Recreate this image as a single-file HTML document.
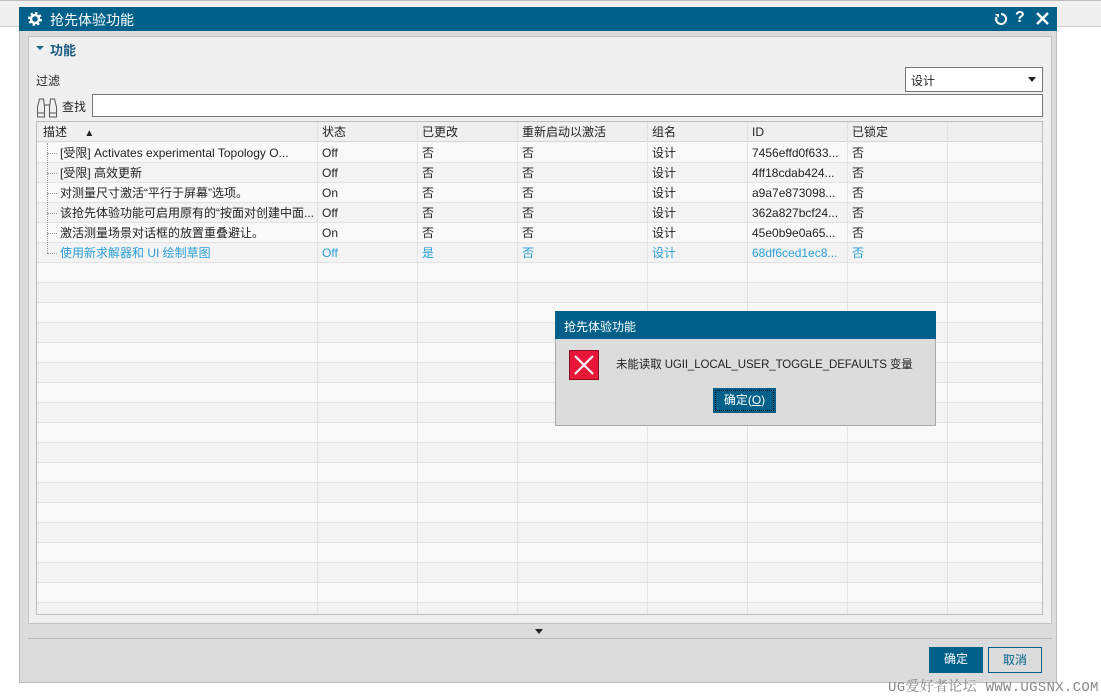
<!DOCTYPE html><html><head><meta charset="utf-8"><style>
*{box-sizing:border-box;margin:0;padding:0}
body{width:1101px;height:697px;background:#fff;font-family:"Liberation Sans","Noto Sans CJK SC",sans-serif;font-size:12px;color:#222;position:relative;overflow:hidden}
.a{position:absolute}
.top{left:0;top:0;width:1101px;height:27px;background:#f0f0f0;border-top:1px solid #bbb;border-bottom:1px solid #ccc}
.dlg{left:19px;top:7px;width:1038px;height:676px;background:#dcdcdc;border:1px solid #bbb}
.tb{left:19px;top:7px;width:1038px;height:24px;background:#00608a;color:#fff;font-size:14px}
.panel{left:28px;top:36px;width:1024px;height:588px;background:#f0f0f0;border:1px solid #c4c4c4}
.tbl{left:36px;top:121px;width:1007px;height:494px;border:1px solid #bdbdbd;background:#f7f7f7;overflow:hidden}
.row{position:absolute;left:0;width:1005px;height:20px;border-bottom:1px solid #e2e2e2}
.c{position:absolute;top:0;height:20px;line-height:20px;border-right:1px solid #e2e2e2;padding-left:4px;white-space:nowrap;font-size:12px}
.hd{background:#efefef;border-bottom:1px solid #d6d6d6}
.blue .c{color:#2aa0d6}
.btn{height:26px;line-height:24px;text-align:center;font-size:12px}
</style></head><body>
<div class="a top"></div>
<div class="a dlg"></div>
<div class="a tb"><svg class="a" style="left:8px;top:4px" width="16" height="16" viewBox="0 0 16 16"><circle cx="8" cy="8" r="5.5" fill="none" stroke="#fff" stroke-width="3" stroke-dasharray="2.2 2.1"/><circle cx="8" cy="8" r="4" fill="none" stroke="#fff" stroke-width="2.5"/></svg><span class="a" style="left:31px;top:3px">抢先体验功能</span>
<svg class="a" style="left:975px;top:5px" width="14" height="14" viewBox="0 0 14 14"><path d="M7 2A5 5 0 1 1 2.5 5" fill="none" stroke="#fff" stroke-width="2"/><path d="M1 2h4v4z" fill="#fff"/></svg>
<span class="a" style="left:996px;top:2px;font-size:16px;font-weight:bold">?</span>
<svg class="a" style="left:1017px;top:5px" width="13" height="13"><path d="M1 1L12 12M12 1L1 12" stroke="#fff" stroke-width="2.4"/></svg></div>
<div class="a panel"></div>
<div class="a" style="left:36px;top:46px;width:0;height:0;border-left:4px solid transparent;border-right:4px solid transparent;border-top:4px solid #1a6b90"></div>
<div class="a" style="left:50px;top:40px;font-size:13px;font-weight:bold;color:#1a5a80">功能</div>
<div class="a" style="left:36px;top:72px">过滤</div>
<div class="a" style="left:905px;top:67px;width:138px;height:25px;background:#fff;border:1px solid #777;padding:4px 5px">设计<span class="a" style="right:6px;top:9px;border-left:4px solid transparent;border-right:4px solid transparent;border-top:5px solid #222"></span></div>
<svg class="a" style="left:36px;top:94px" width="24" height="24" viewBox="0 0 24 24" fill="none" stroke="#555" stroke-width="1"><path d="M1.5 23V13l2-8h4l1 8v10zM13.5 23V13l1-8h4l2 8v10zM1.5 19h7M13.5 19h7M8.5 11h5"/></svg>
<div class="a" style="left:62px;top:98px">查找</div>
<div class="a" style="left:92px;top:94px;width:951px;height:23px;background:#fff;border:1px solid #777"></div>
<div class="a tbl">
<div class="row hd" style="top:0"><div class="c" style="left:0;width:281px;padding-left:6px">描述 <span style="margin-left:14px;font-size:10px">▲</span></div><div class="c" style="left:281px;width:100px">状态</div><div class="c" style="left:381px;width:100px">已更改</div><div class="c" style="left:481px;width:130px">重新启动以激活</div><div class="c" style="left:611px;width:100px">组名</div><div class="c" style="left:711px;width:100px">ID</div><div class="c" style="left:811px;width:100px">已锁定</div><div class="c" style="left:911px;width:95px"></div></div>
<div id="rows"></div>
</div>
<script>
var d=[["[受限] Activates experimental Topology O...","Off","否","否","设计","7456effd0f633...","否"],["[受限] 高效更新","Off","否","否","设计","4ff18cdab424...","否"],["对测量尺寸激活“平行于屏幕”选项。","On","否","否","设计","a9a7e873098...","否"],["该抢先体验功能可启用原有的“按面对创建中面...","Off","否","否","设计","362a827bcf24...","否"],["激活测量场景对话框的放置重叠避让。","On","否","否","设计","45e0b9e0a65...","否"],["使用新求解器和 UI 绘制草图","Off","是","否","设计","68df6ced1ec8...","否"]];
var L=[0,281,381,481,611,711,811,911],W=[281,100,100,130,100,100,100,95],h="";
for(var i=0;i<24;i++){var r=d[i],bg=i%2?"#f3f3f3":"#f9f9f9";h+='<div class="row'+(i==5?' blue':'')+'" style="top:'+(21+i*20)+'px;background:'+bg+'">';for(var j=0;j<8;j++){var t=r&&j<7?r[j]:"";var s=j==0&&r?'padding-left:23px':'';h+='<div class="c" style="left:'+L[j]+'px;width:'+W[j]+'px;'+s+'">'+t+'</div>';}if(r)h+='<div class="a" style="left:10px;top:'+(i==0?0:-10)+'px;height:'+(i==5?20:30)+'px;border-left:1px dotted #999"></div><div class="a" style="left:10px;top:10px;width:10px;border-top:1px dotted #999"></div>';h+='</div>';}
document.getElementById("rows").innerHTML=h;
</script>
<div class="a" style="left:535px;top:629px;border-left:4px solid transparent;border-right:4px solid transparent;border-top:5px solid #222"></div>
<div class="a" style="left:28px;top:638px;width:1024px;border-top:1px solid #b8b8b8"></div>
<div class="a btn" style="left:929px;top:647px;width:54px;background:#00608a;color:#fff">确定</div>
<div class="a btn" style="left:988px;top:647px;width:54px;background:#dcdcdc;border:1px solid #00608a;color:#00608a">取消</div>
<div class="a" style="left:888px;top:676px;font-family:'Liberation Mono','Noto Serif CJK SC',monospace;font-size:14px;color:#888;letter-spacing:0.3px">UG爱好者论坛 WWW.UGSNX.COM</div>
<div class="a" style="left:555px;top:311px;width:381px;height:115px;background:#dcdcdc;border:1px solid #aaa"></div>
<div class="a" style="left:555px;top:311px;width:381px;height:28px;background:#00608a;color:#fff;padding:7px 9px;font-size:12px">抢先体验功能</div>
<svg class="a" style="left:569px;top:350px" width="30" height="30"><rect x="0.5" y="0.5" width="29" height="29" fill="#e8173a" stroke="#8a0d1e"/><path d="M6 6L24 24M24 6L6 24" stroke="#fff" stroke-width="2"/></svg>
<div class="a" style="left:616px;top:356px;font-size:11.5px;letter-spacing:-0.1px">未能读取 UGII_LOCAL_USER_TOGGLE_DEFAULTS 变量</div>
<div class="a" style="left:713px;top:388px;width:63px;height:25px;background:#00608a;padding:2px"><div style="border:1px dotted #000;height:21px;line-height:19px;text-align:center;color:#fff">确定(<u>O</u>)</div></div>
</body></html>
